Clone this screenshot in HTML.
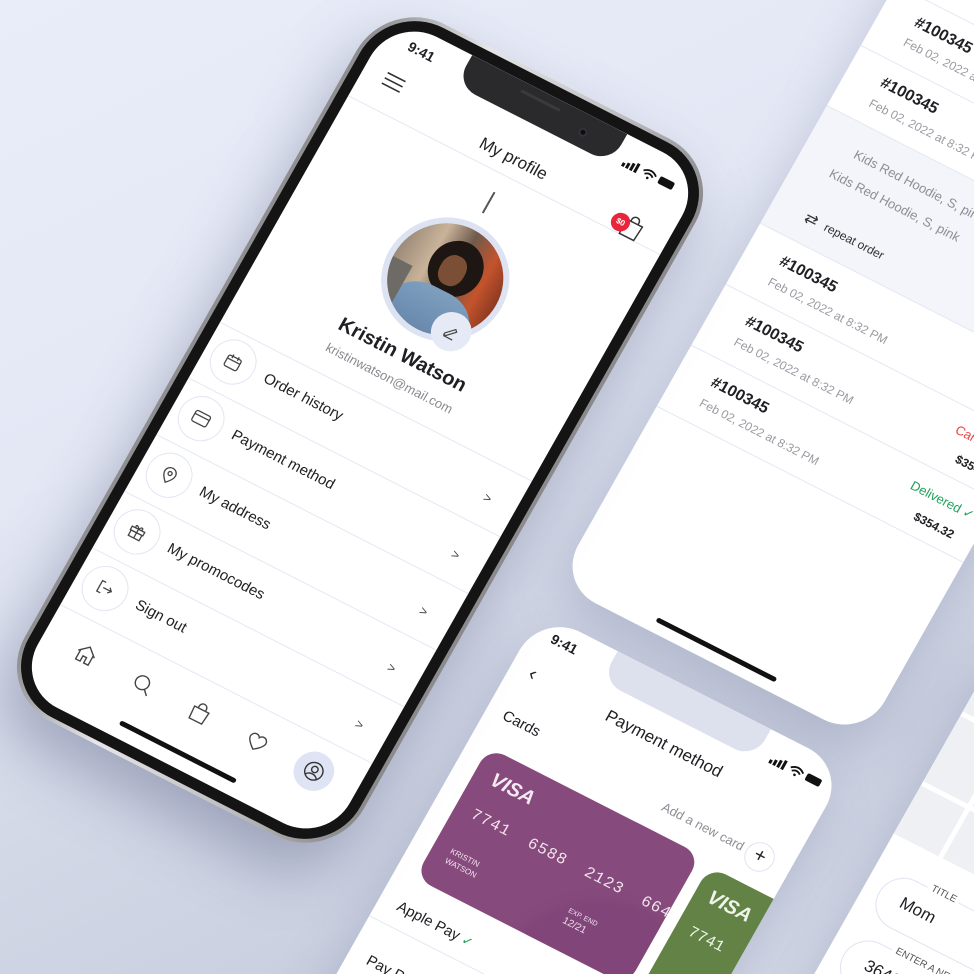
<!DOCTYPE html>
<html><head><meta charset="utf-8">
<style>
*{margin:0;padding:0;box-sizing:border-box}
html,body{width:974px;height:974px;overflow:hidden}
body{position:relative;font-family:"Liberation Sans",sans-serif;color:#1f1f24;
background:linear-gradient(155deg,#e9edf9 0%,#e4e8f5 35%,#d3d8e7 60%,#c9cfdf 80%,#d6dbe9 100%);}
.abs{position:absolute}
.rot{position:absolute;transform:rotate(27deg) skewX(-2.5deg);transform-origin:50% 50%}
.scr{background:#fff;overflow:hidden}
.t{position:absolute;white-space:nowrap}
.line{position:absolute;left:0;height:1px;background:#e4e8f4}
.ic{position:absolute;width:46px;height:46px;border-radius:50%;border:1px solid #e2e6f3;background:#fff;display:flex;align-items:center;justify-content:center}
.lab{position:absolute;left:66px;font-size:15px;color:#222}
.chev{position:absolute;left:316px;font-size:13px;color:#444}
.nav{position:absolute;width:40px;height:40px;display:flex;align-items:center;justify-content:center}
</style></head><body>

<!-- screen 2 : order history (top right) -->
<div class="rot scr" style="left:727px;top:-57px;width:344px;height:768px;border-radius:44px;box-shadow:0 20px 50px rgba(90,100,140,.25)">
  <div class="line" style="top:80px;width:344px"></div>
  <div class="t" style="left:36px;top:96px;font-size:16px;font-weight:bold">#100345</div>
  <div class="t" style="left:36px;top:120px;font-size:12px;color:#9a9aa2">Feb 02, 2022 at 8:32 PM</div>
  <div class="line" style="top:150px;width:344px"></div>
  <div class="t" style="left:36px;top:165px;font-size:16px;font-weight:bold">#100345</div>
  <div class="t" style="left:36px;top:190px;font-size:12px;color:#9a9aa2">Feb 02, 2022 at 8:32 PM</div>
  <div class="abs" style="left:0;top:219px;width:344px;height:136px;background:#f3f5fb;border-top:1px solid #e4e8f4;border-bottom:1px solid #e4e8f4"></div>
  <div class="t" style="left:48px;top:242px;font-size:13px;color:#8d8d95">Kids Red Hoodie, S, pink</div>
  <div class="t" style="left:36px;top:270px;font-size:13px;color:#8d8d95">Kids Red Hoodie, S, pink</div>
  <div class="t" style="left:36px;top:318px;font-size:16px;color:#333">⇄</div>
  <div class="t" style="left:58px;top:321px;font-size:12px;color:#333">repeat order</div>
  <div class="t" style="left:36px;top:370px;font-size:16px;font-weight:bold">#100345</div>
  <div class="t" style="left:36px;top:395px;font-size:12px;color:#9a9aa2">Feb 02, 2022 at 8:32 PM</div>
  <div class="line" style="top:424px;width:344px"></div>
  <div class="t" style="left:36px;top:439px;font-size:16px;font-weight:bold">#100345</div>
  <div class="t" style="left:36px;top:464px;font-size:12px;color:#9a9aa2">Feb 02, 2022 at 8:32 PM</div>
  <div class="t" style="right:14px;top:441px;font-size:13px;color:#e84545">Cancelled</div>
  <div class="t" style="right:14px;top:468px;font-size:12px;font-weight:bold">$354.32</div>
  <div class="line" style="top:494px;width:344px"></div>
  <div class="t" style="left:36px;top:509px;font-size:16px;font-weight:bold">#100345</div>
  <div class="t" style="left:36px;top:534px;font-size:12px;color:#9a9aa2">Feb 02, 2022 at 8:32 PM</div>
  <div class="t" style="right:14px;top:511px;font-size:13px;color:#21a05a">Delivered ✓</div>
  <div class="t" style="right:22px;top:538px;font-size:12px;font-weight:bold">$354.32</div>
  <div class="line" style="top:564px;width:344px"></div>
  <div class="abs" style="left:105px;top:752px;width:134px;height:5px;border-radius:3px;background:#111"></div>
</div>

<!-- screen 4 : address (bottom right) -->
<div class="rot scr" style="left:804px;top:663px;width:344px;height:748px;border-radius:44px;box-shadow:0 20px 50px rgba(90,100,140,.25)">
  <div class="abs" style="left:0;top:0;width:344px;height:230px;background:#eef0f3">
    <div class="abs" style="left:50px;top:0;width:5px;height:230px;background:#fff"></div>
    <div class="abs" style="left:130px;top:0;width:5px;height:230px;background:#fff"></div>
    <div class="abs" style="left:0;top:90px;width:344px;height:5px;background:#fff"></div>
    <div class="abs" style="left:0;top:170px;width:344px;height:5px;background:#fff"></div>
  </div>
  <div class="abs" style="left:16px;top:262px;width:312px;height:54px;border:1px solid #dfe4f3;border-radius:27px"></div>
  <div class="t" style="left:56px;top:256px;font-size:10px;color:#555;background:#fff;padding:0 4px">TITLE</div>
  <div class="t" style="left:40px;top:278px;font-size:17px">Mom</div>
  <div class="abs" style="left:16px;top:334px;width:312px;height:54px;border:1px solid #dfe4f3;border-radius:27px"></div>
  <div class="t" style="left:56px;top:328px;font-size:10px;color:#555;background:#fff;padding:0 4px">ENTER A NEW ADDRESS</div>
  <div class="t" style="left:40px;top:350px;font-size:17px">3646 S 58th Ave</div>
</div>

<!-- screen 3 : payment method (bottom) -->
<div class="rot scr" style="left:338px;top:642px;width:344px;height:748px;border-radius:44px;box-shadow:0 20px 50px rgba(90,100,140,.25)">
  <div class="abs" style="left:86px;top:-2px;width:172px;height:36px;background:#dde1ee;border-radius:0 0 22px 22px"></div>
  <div class="t" style="left:22px;top:10px;font-size:14px;font-weight:bold">9:41</div>
  <svg class="abs" style="left:272px;top:20px" width="58" height="12" viewBox="0 0 58 12"><rect x="0" y="7" width="3" height="4" fill="#111"/><rect x="4.5" y="5" width="3" height="6" fill="#111"/><rect x="9" y="3" width="3" height="8" fill="#111"/><rect x="13.5" y="1" width="3" height="10" fill="#111"/><path d="M22 5 q7-6 14 0 M24.5 7.5 q4.5-4 9 0" stroke="#111" stroke-width="1.8" fill="none"/><circle cx="29" cy="10" r="1.3" fill="#111"/><rect x="40" y="2" width="16" height="8" rx="2" fill="#111"/></svg>
  <div class="t" style="left:20px;top:48px;font-size:20px;color:#222">‹</div>
  <div class="t" style="left:0;width:344px;text-align:center;top:52px;font-size:17px">Payment method</div>
  <div class="t" style="left:18px;top:100px;font-size:15px">Cards</div>
  <div class="t" style="right:52px;top:110px;font-size:13px;color:#8d8d95">Add a new card</div>
  <div class="abs" style="left:296px;top:104px;width:30px;height:30px;border-radius:50%;border:1px solid #dfe4f3;text-align:center;line-height:27px;font-size:20px">+</div>
  <div class="abs" style="left:21px;top:144px;width:238px;height:150px;border-radius:18px;background:#874a7d;overflow:hidden">
    <div class="abs" style="left:120px;top:80px;width:200px;height:200px;border-radius:50%;background:#82457a;box-shadow:0 0 20px rgba(0,0,0,.1)"></div>
    <div class="t" style="left:18px;top:16px;font-size:20px;font-weight:bold;font-style:italic;color:#f4eaf2">VISA</div>
    <div class="t" style="left:18px;top:58px;font-size:16px;color:#f0e4ee;font-family:'Liberation Mono',monospace;letter-spacing:1px">7741 &nbsp;6588 &nbsp;2123 &nbsp;6644</div>
    <div class="t" style="left:18px;top:104px;font-size:8px;color:#f0e4ee;line-height:11px">KRISTIN<br>WATSON</div>
    <div class="t" style="left:150px;top:104px;font-size:7px;color:#f0e4ee;line-height:11px">EXP. END<br><span style="font-size:10px">12/21</span></div>
  </div>
  <div class="abs" style="left:272px;top:150px;width:120px;height:150px;border-radius:18px;background:#628246">
    <div class="t" style="left:14px;top:16px;font-size:20px;font-weight:bold;font-style:italic;color:#f0f5ea">VISA</div>
    <div class="t" style="left:14px;top:58px;font-size:16px;color:#eef4e8;font-family:'Liberation Mono',monospace">7741</div>
  </div>
  <div class="t" style="left:20px;top:318px;font-size:15px">Apple Pay <span style="color:#21a05a;font-size:13px">✓</span></div>
  <div class="line" style="top:348px;width:344px"></div>
  <div class="t" style="left:20px;top:380px;font-size:15px">Pay Pal</div>
</div>

<!-- main phone -->
<div class="rot" style="left:170px;top:30px;width:380px;height:800px;border-radius:64px;background:linear-gradient(90deg,#8d8d8f,#e6e6e8 30%,#bdbdc0 70%,#8a8a8c);box-shadow:0 30px 60px rgba(60,70,110,.35)">
  <div class="abs" style="left:4px;top:4px;width:372px;height:792px;border-radius:60px;background:#141414"></div>
  <div class="abs scr" style="left:15px;top:15px;width:350px;height:770px;border-radius:48px">
    <div class="abs" style="left:88px;top:0;width:174px;height:34px;background:#2a2a2c;border-radius:0 0 22px 22px">
      <div class="abs" style="left:130px;top:14px;width:9px;height:9px;border-radius:50%;background:#0d0d1a;border:2px solid #333"></div>
      <div class="abs" style="left:60px;top:8px;width:44px;height:3px;border-radius:2px;background:#3a3a3c"></div>
    </div>
    <div class="t" style="left:28px;top:12px;font-size:14px;font-weight:bold">9:41</div>
    <svg class="abs" style="left:272px;top:20px" width="58" height="12" viewBox="0 0 58 12"><rect x="0" y="7" width="3" height="4" fill="#111"/><rect x="4.5" y="5" width="3" height="6" fill="#111"/><rect x="9" y="3" width="3" height="8" fill="#111"/><rect x="13.5" y="1" width="3" height="10" fill="#111"/><path d="M22 5 q7-6 14 0 M24.5 7.5 q4.5-4 9 0" stroke="#111" stroke-width="1.8" fill="none"/><circle cx="29" cy="10" r="1.3" fill="#111"/><rect x="40" y="2" width="16" height="8" rx="2" fill="#111"/></svg>
    <svg class="abs" style="left:22px;top:52px" width="22" height="16" viewBox="0 0 22 16"><path d="M1 2h20M1 8h20M1 14h20" stroke="#333" stroke-width="1.6" fill="none"/></svg>
    <div class="t" style="left:0;width:350px;text-align:center;top:64px;font-size:17px;color:#222">My profile</div>
    <div class="line" style="top:92px;width:350px"></div>
    <svg class="abs" style="left:300px;top:68px" width="24" height="26" viewBox="0 0 24 26"><path d="M3 8h18l-1 16H4z M8 8V6a4 4 0 0 1 8 0v2" stroke="#333" stroke-width="1.5" fill="none"/></svg>
    <div class="abs" style="left:290px;top:72px;width:19px;height:19px;border-radius:50%;background:#e8253a;color:#fff;font-size:8px;font-weight:bold;text-align:center;line-height:19px">$0</div>
    <div class="abs" style="left:174px;top:112px;width:1.5px;height:24px;background:#555"></div>
    <div class="abs" style="left:112px;top:149px;width:126px;height:126px;border-radius:50%;background:#dde3f3"></div>
    <div class="abs" style="left:118px;top:155px;width:114px;height:114px;border-radius:50%;overflow:hidden;background:linear-gradient(90deg,#9a8a78 0%,#c9b39a 30%,#6f5b4c 55%,#c4532c 80%,#8c3a22 100%)">
      <div class="abs" style="left:34px;top:14px;width:54px;height:58px;border-radius:50%;background:#1e1612"></div>
      <div class="abs" style="left:46px;top:30px;width:26px;height:32px;border-radius:45%;background:#7b4e36"></div>
      <div class="abs" style="left:16px;top:68px;width:86px;height:70px;border-radius:40% 40% 0 0;background:linear-gradient(#7f9fbf,#5c7ea3)"></div>
      <div class="abs" style="left:0;top:60px;width:22px;height:54px;background:#6e6a66"></div>
    </div>
    <div class="abs" style="left:186px;top:236px;width:40px;height:40px;border-radius:50%;background:#e6eaf6;display:flex;align-items:center;justify-content:center"><svg width="16" height="16" viewBox="0 0 16 16"><path d="M3 12 L11 4 L13 6 L5 14 H3z M3 15h10" stroke="#444" stroke-width="1.2" fill="none"/></svg></div>
    <div class="t" style="left:0;width:350px;text-align:center;top:288px;font-size:20px;font-weight:bold">Kristin Watson</div>
    <div class="t" style="left:0;width:350px;text-align:center;top:318px;font-size:13px;color:#8a8a90">kristinwatson@mail.com</div>

    <div class="line" style="top:352px;width:350px"></div>
    <div class="line" style="top:416px;width:350px"></div>
    <div class="line" style="top:481px;width:350px"></div>
    <div class="line" style="top:546px;width:350px"></div>
    <div class="line" style="top:611px;width:350px"></div>
    <div class="line" style="top:676px;width:350px"></div>

    <div class="ic" style="left:8px;top:359px"><svg width="20" height="20" viewBox="0 0 20 20"><rect x="3" y="5" width="14" height="12" rx="2" stroke="#444" stroke-width="1.3" fill="none"/><path d="M3 9h14M7 3v4M13 3v4" stroke="#444" stroke-width="1.3"/></svg></div>
    <div class="lab" style="top:373px">Order history</div><div class="chev" style="top:380px">&gt;</div>
    <div class="ic" style="left:8px;top:424px"><svg width="20" height="20" viewBox="0 0 20 20"><rect x="2" y="4" width="16" height="12" rx="2" stroke="#444" stroke-width="1.3" fill="none"/><path d="M2 8h16" stroke="#444" stroke-width="1.3"/></svg></div>
    <div class="lab" style="top:438px">Payment method</div><div class="chev" style="top:445px">&gt;</div>
    <div class="ic" style="left:8px;top:489px"><svg width="20" height="20" viewBox="0 0 20 20"><path d="M10 18 C4 12 4 9 4 8 a6 6 0 0 1 12 0 c0 1 0 4-6 10z" stroke="#444" stroke-width="1.3" fill="none"/><circle cx="10" cy="8" r="2" stroke="#444" stroke-width="1.3" fill="none"/></svg></div>
    <div class="lab" style="top:503px">My address</div><div class="chev" style="top:510px">&gt;</div>
    <div class="ic" style="left:8px;top:554px"><svg width="20" height="20" viewBox="0 0 20 20"><rect x="3" y="7" width="14" height="4" stroke="#444" stroke-width="1.3" fill="none"/><rect x="4" y="11" width="12" height="6" stroke="#444" stroke-width="1.3" fill="none"/><path d="M10 7v10 M10 7 C8 3 5 4 7 7 M10 7 C12 3 15 4 13 7" stroke="#444" stroke-width="1.3" fill="none"/></svg></div>
    <div class="lab" style="top:568px">My promocodes</div><div class="chev" style="top:575px">&gt;</div>
    <div class="ic" style="left:8px;top:619px"><svg width="20" height="20" viewBox="0 0 20 20"><path d="M8 4H4v12h4 M8 10h9 M14 7l3 3-3 3" stroke="#444" stroke-width="1.3" fill="none"/></svg></div>
    <div class="lab" style="top:633px">Sign out</div><div class="chev" style="top:640px">&gt;</div>

    <div class="nav" style="left:27px;top:690px"><svg width="24" height="24" viewBox="0 0 24 24"><path d="M3 11 L12 3 L21 11 M5 9v11h5v-6h4v6h5V9" stroke="#444" stroke-width="1.4" fill="none"/></svg></div>
    <div class="nav" style="left:91px;top:690px"><svg width="24" height="24" viewBox="0 0 24 24"><circle cx="11" cy="11" r="7" stroke="#444" stroke-width="1.4" fill="none"/><path d="M16 16l5 5" stroke="#444" stroke-width="1.4"/></svg></div>
    <div class="nav" style="left:155px;top:690px"><svg width="24" height="24" viewBox="0 0 24 24"><path d="M4 8h16l-1 13H5z M8 8V6a4 4 0 0 1 8 0v2" stroke="#444" stroke-width="1.4" fill="none"/></svg></div>
    <div class="nav" style="left:219px;top:690px"><svg width="24" height="24" viewBox="0 0 24 24"><path d="M12 20 C4 14 2 10 4 7 a4.5 4.5 0 0 1 8 0 a4.5 4.5 0 0 1 8 0 c2 3 0 7-8 13z" stroke="#444" stroke-width="1.4" fill="none"/></svg></div>
    <div class="nav" style="left:283px;top:690px;border-radius:50%;background:#dfe4f4"><svg width="24" height="24" viewBox="0 0 24 24"><circle cx="12" cy="12" r="9" stroke="#333" stroke-width="1.4" fill="none"/><circle cx="12" cy="10" r="3.2" stroke="#333" stroke-width="1.4" fill="none"/><path d="M6 18 c3-4 9-4 12 0" stroke="#333" stroke-width="1.4" fill="none"/></svg></div>
    <div class="abs" style="left:110px;top:752px;width:130px;height:5px;border-radius:3px;background:#111"></div>
  </div>
</div>
</body></html>
